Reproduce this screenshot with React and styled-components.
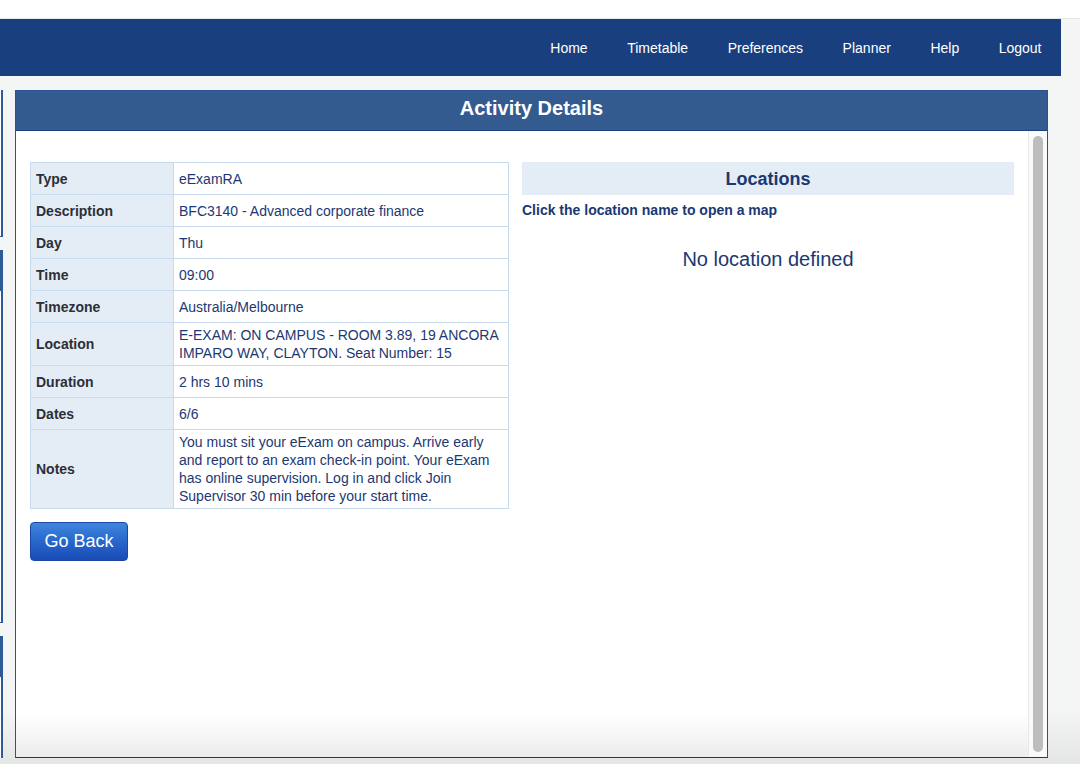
import styled, { createGlobalStyle } from 'styled-components';

const NAV_LINKS = ['Home', 'Timetable', 'Preferences', 'Planner', 'Help', 'Logout'];

const ACTIVITY = [
  { label: 'Type', value: 'eExamRA' },
  { label: 'Description', value: 'BFC3140 - Advanced corporate finance' },
  { label: 'Day', value: 'Thu' },
  { label: 'Time', value: '09:00' },
  { label: 'Timezone', value: 'Australia/Melbourne' },
  {
    label: 'Location',
    value: 'E-EXAM: ON CAMPUS - ROOM 3.89, 19 ANCORA IMPARO WAY, CLAYTON. Seat Number: 15',
  },
  { label: 'Duration', value: '2 hrs 10 mins' },
  { label: 'Dates', value: '6/6' },
  {
    label: 'Notes',
    value:
      'You must sit your eExam on campus. Arrive early and report to an exam check-in point. Your eExam has online supervision. Log in and click Join Supervisor 30 min before your start time.',
  },
];

export default function App() {
  return (
    <>
      <GlobalStyle />
      <StPage>
        <StTopStrip />
        <StNavBar>
          {NAV_LINKS.map(link => (
            <StNavLink key={link} href="#">
              {link}
            </StNavLink>
          ))}
        </StNavBar>
        <StMain>
          {/* collapsed side menu, only its edge is visible */}
          <StSideMenu>
            <StSideBox $height={147} />
            <StSideTab />
            <StSideBox $height={332} />
            <StSideTab />
            <StSideBox $height={81} $open />
          </StSideMenu>
          <StPanel>
            <StPanelHeader>Activity Details</StPanelHeader>
            <StPanelBody>
              <StScrollArea>
                <StDetailColumn>
                  <StDetailTable>
                    <tbody>
                      {ACTIVITY.map(row => (
                        <tr key={row.label}>
                          <StLabelCell>{row.label}</StLabelCell>
                          <StValueCell>{row.value}</StValueCell>
                        </tr>
                      ))}
                    </tbody>
                  </StDetailTable>
                  <StButton type="button">Go Back</StButton>
                </StDetailColumn>
                <StLocationColumn>
                  <StLocationTitle>Locations</StLocationTitle>
                  <StLocationHint>Click the location name to open a map</StLocationHint>
                  <StNoLocation>No location defined</StNoLocation>
                </StLocationColumn>
              </StScrollArea>
              <StScrollTrack>
                <StScrollThumb />
              </StScrollTrack>
            </StPanelBody>
          </StPanel>
        </StMain>
      </StPage>
    </>
  );
}

const GlobalStyle = createGlobalStyle`
  html, body {
    margin: 0;
    padding: 0;
  }
  body {
    background: #f4f5f5;
    font-family: 'Liberation Sans', Arial, sans-serif;
    font-size: 14px;
  }
  * {
    box-sizing: border-box;
  }
`;

const StPage = styled.div`
  width: 1080px;
  height: 764px;
  overflow: hidden;
  display: flex;
  flex-direction: column;
  background: linear-gradient(to bottom, #f4f5f5 93%, #e4e5e5 100%);
`;

const StTopStrip = styled.div`
  height: 19px;
  background: #ffffff;
  border-bottom: 1px solid #e6e8e8;
`;

const StNavBar = styled.nav`
  width: 1061px;
  height: 57px;
  background: #1a3f7f;
  display: flex;
  justify-content: flex-end;
  align-items: center;
  padding-right: 0;
`;

const StNavLink = styled.a`
  color: #ffffff;
  text-decoration: none;
  font-size: 14px;
  padding: 0 19.5px 0 20px;
  line-height: 20px;
`;

const StMain = styled.div`
  display: flex;
  padding-top: 14px;
  gap: 12px;
`;

const StSideMenu = styled.div`
  width: 3px;
  display: flex;
  flex-direction: column;
`;

const StSideBox = styled.div`
  height: ${props => props.$height}px;
  border-right: 2px solid #2f5a98;
  border-bottom: ${props => (props.$open ? 'none' : '1px solid #2f5a98')};
  background: #ffffff;
  margin-bottom: ${props => (props.$open ? 0 : 13)}px;
`;

const StSideTab = styled.div`
  height: 41px;
  background: #2f5a98;
`;

const StPanel = styled.section`
  width: 1033px;
  height: 668px;
  border: 1.5px solid #2a5294;
  border-bottom-color: #173a78;
  display: flex;
  flex-direction: column;
`;

const StPanelHeader = styled.h2`
  margin: 0;
  height: 40px;
  background: #345b90;
  border-bottom: 1px solid #1c4080;
  color: #ffffff;
  font-size: 20px;
  font-weight: 700;
  text-align: center;
  line-height: 35px;
`;

const StPanelBody = styled.div`
  flex: 1;
  display: flex;
  background: linear-gradient(to bottom, #ffffff 0%, #ffffff 93%, #ececec 100%);
`;

const StScrollArea = styled.div`
  flex: 1;
  display: flex;
  align-items: flex-start;
  gap: 13px;
  padding: 31px 0 0 14px;
`;

const StDetailColumn = styled.div`
  width: 479px;
  display: flex;
  flex-direction: column;
  align-items: flex-start;
  gap: 13px;
`;

const StDetailTable = styled.table`
  width: 479px;
  border-collapse: collapse;
  border: 1px solid #c7daee;
  td {
    border: 1px solid #c7daee;
    padding: 3px 5px;
    height: 32px;
    line-height: 18px;
    vertical-align: middle;
  }
`;

const StLabelCell = styled.td`
  width: 143px;
  background: #e4edf6;
  color: #2b2f36;
  font-weight: 700;
`;

const StValueCell = styled.td`
  background: #ffffff;
  color: #1c3873;
`;

const StButton = styled.button`
  width: 98px;
  height: 39px;
  border: 1px solid #1c45a6;
  border-radius: 4px;
  background: linear-gradient(to bottom, #3f86dc 0%, #2767cb 50%, #1a4bb5 100%);
  color: #ffffff;
  font-family: 'Liberation Sans', Arial, sans-serif;
  font-size: 18px;
  cursor: pointer;
`;

const StLocationColumn = styled.div`
  width: 492px;
  display: flex;
  flex-direction: column;
`;

const StLocationTitle = styled.h3`
  margin: 0;
  height: 33px;
  background: #e4edf6;
  color: #1b3772;
  font-size: 18px;
  font-weight: 700;
  text-align: center;
  line-height: 34px;
`;

const StLocationHint = styled.div`
  margin-top: 7px;
  color: #1b3772;
  font-size: 14px;
  font-weight: 700;
  line-height: 16px;
`;

const StNoLocation = styled.div`
  margin-top: 30px;
  color: #1b3772;
  font-size: 20px;
  text-align: center;
`;

const StScrollTrack = styled.div`
  width: 19px;
  border-left: 1px solid #e8e8e8;
  background: #fafafa;
  padding: 5px 4px 5px 4px;
`;

const StScrollThumb = styled.div`
  width: 10px;
  height: 100%;
  background: #bdbdbd;
  border-radius: 5px;
`;
